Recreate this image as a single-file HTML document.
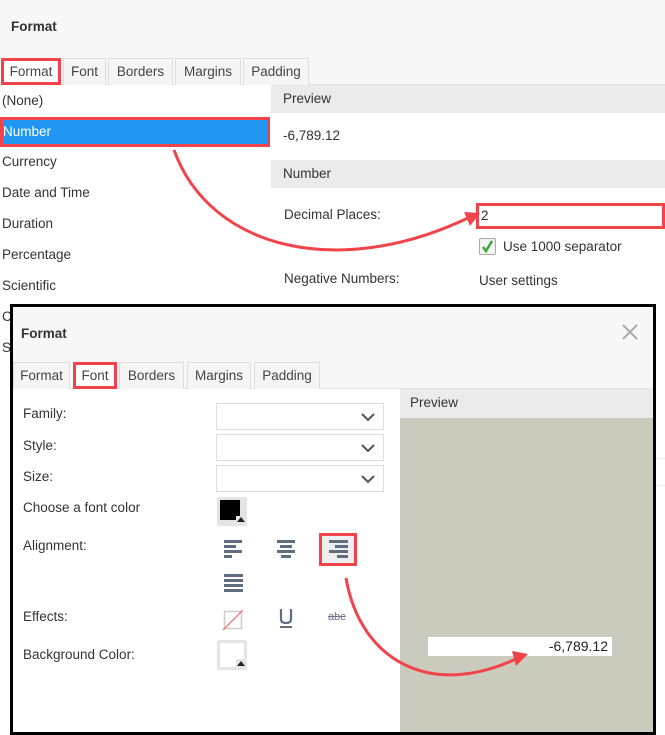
<!DOCTYPE html>
<html><head><style>
*{margin:0;padding:0;box-sizing:border-box}
body{width:665px;height:735px;position:relative;overflow:hidden;background:#fff;font-family:"Liberation Sans",sans-serif;font-size:13.5px;color:#333}
.a{position:absolute;white-space:nowrap}
.tab{position:absolute;height:27px;border:1px solid #ddd;border-bottom:none;background:#f5f5f5;text-align:center;line-height:25px;color:#444}
.red{border:3px solid #f0444a !important}
.tab.red{line-height:21px;border-bottom:3px solid #f0444a}
.sel{position:absolute;border:1px solid #ddd;background:#fff;height:27px;width:168px;left:216px}
.sel svg{position:absolute;right:8px;top:8px}
.bar{position:absolute;height:2.5px;background:#5e6e80}
</style></head><body>
<!-- top section -->
<div class="a" style="left:0;top:0;width:665px;height:85px;background:#f7f7f7"></div>
<div class="a" style="left:11px;top:19px;font-weight:bold;font-size:13.5px;color:#333">Format</div>
<div class="a" style="left:0;top:84px;width:665px;height:1px;background:#e3e3e3"></div>
<div class="tab red" style="left:1px;top:58px;width:60px;background:#fff">Format</div>
<div class="tab" style="left:63px;top:58px;width:43px">Font</div>
<div class="tab" style="left:108px;top:58px;width:65px">Borders</div>
<div class="tab" style="left:175px;top:58px;width:66px">Margins</div>
<div class="tab" style="left:243px;top:58px;width:66px">Padding</div>

<div class="a" style="left:2px;top:93px">(None)</div>
<div class="a red" style="left:0;top:117px;width:270px;height:30px;background:#2196f3;color:#fff;line-height:24px">Number</div>
<div class="a" style="left:2px;top:154px">Currency</div>
<div class="a" style="left:2px;top:185px">Date and Time</div>
<div class="a" style="left:2px;top:216px">Duration</div>
<div class="a" style="left:2px;top:247px">Percentage</div>
<div class="a" style="left:2px;top:278px">Scientific</div>
<div class="a" style="left:2px;top:309px">C</div>
<div class="a" style="left:2px;top:340px">S</div>

<div class="a" style="left:271px;top:85px;width:394px;height:28px;background:#ebebeb;padding:6px 12px">Preview</div>
<div class="a" style="left:283px;top:128px">-6,789.12</div>
<div class="a" style="left:271px;top:160px;width:394px;height:28px;background:#ebebeb;padding:6px 12px">Number</div>
<div class="a" style="left:284px;top:207px">Decimal Places:</div>
<div class="a red" style="left:476px;top:203px;width:189px;height:26px;padding:2px 0 0 2px">2</div>
<div class="a" style="left:479px;top:238px;width:17px;height:17px;border:1px solid #aaa;border-radius:2px;background:#f4f4f4"><svg width="15" height="15" style="position:absolute;left:0;top:0"><path d="M3 8 L6 12 L12 2" stroke="#3aa83a" stroke-width="2.5" fill="none"/></svg></div>
<div class="a" style="left:503px;top:239px">Use 1000 separator</div>
<div class="a" style="left:284px;top:271px">Negative Numbers:</div>
<div class="a" style="left:479px;top:273px">User settings</div>
<div class="a" style="left:655px;top:458px;width:10px;height:28px;border:1px solid #eee;border-right:none"></div>

<!-- dialog -->
<div class="a" style="left:10px;top:304px;width:646px;height:431px;border:3px solid #000;background:#fff;overflow:hidden">
  <div class="a" style="left:0;top:0;width:640px;height:81px;background:#f7f7f7"></div>
  <div class="a" style="left:0;top:81px;width:640px;height:1px;background:#e3e3e3"></div>
  <div class="a" style="left:8px;top:19px;font-weight:bold">Format</div>
  <svg class="a" style="left:608px;top:16px" width="18" height="18"><path d="M2 2L16 16M16 2L2 16" stroke="#aaa" stroke-width="2"/></svg>
  <div class="tab" style="left:0;top:55px;width:57px">Format</div>
  <div class="tab red" style="left:60px;top:55px;width:44px;background:#fff">Font</div>
  <div class="tab" style="left:106px;top:55px;width:65px">Borders</div>
  <div class="tab" style="left:174px;top:55px;width:64px">Margins</div>
  <div class="tab" style="left:241px;top:55px;width:66px">Padding</div>

  <div class="a" style="left:10px;top:99px">Family:</div>
  <div class="a" style="left:10px;top:131px">Style:</div>
  <div class="a" style="left:10px;top:162px">Size:</div>
  <div class="a" style="left:10px;top:193px">Choose a font color</div>
  <div class="a" style="left:10px;top:231px">Alignment:</div>
  <div class="a" style="left:10px;top:302px">Effects:</div>
  <div class="a" style="left:10px;top:340px">Background Color:</div>

  <div class="sel" style="left:203px;top:96px"><svg width="14" height="10"><path d="M1 2L7 8L13 2" stroke="#555" stroke-width="2" fill="none"/></svg></div>
  <div class="sel" style="left:203px;top:127px"><svg width="14" height="10"><path d="M1 2L7 8L13 2" stroke="#555" stroke-width="2" fill="none"/></svg></div>
  <div class="sel" style="left:203px;top:158px"><svg width="14" height="10"><path d="M1 2L7 8L13 2" stroke="#555" stroke-width="2" fill="none"/></svg></div>

  <div class="a" style="left:204px;top:190px;width:30px;height:29px;background:#e4e4e4;border-radius:2px"><div style="position:absolute;left:3px;top:3px;width:20px;height:20px;background:#000"></div><div style="position:absolute;left:19px;top:19px;width:10px;height:9px;background:#e4e4e4"></div><svg width="8" height="5" style="position:absolute;left:20px;top:20px"><path d="M0 5L4 0L8 5Z" fill="#222"/></svg></div>

  <!-- alignment -->
  <div class="bar" style="left:211px;top:233px;width:18px"></div><div class="bar" style="left:211px;top:238px;width:12px"></div><div class="bar" style="left:211px;top:243px;width:18px"></div><div class="bar" style="left:211px;top:248px;width:8px"></div>
  <div class="bar" style="left:264px;top:233px;width:18px"></div><div class="bar" style="left:267px;top:238px;width:12px"></div><div class="bar" style="left:264px;top:243px;width:18px"></div><div class="bar" style="left:268px;top:248px;width:10px"></div>
  <div class="a red" style="left:306px;top:226px;width:38px;height:33px;background:#eee"></div>
  <div class="bar" style="left:316px;top:233px;width:19px"></div><div class="bar" style="left:322px;top:238px;width:13px"></div><div class="bar" style="left:316px;top:243px;width:19px"></div><div class="bar" style="left:324px;top:248px;width:11px"></div>
  <div class="bar" style="left:211px;top:267px;width:19px"></div><div class="bar" style="left:211px;top:272px;width:19px"></div><div class="bar" style="left:211px;top:277px;width:19px"></div><div class="bar" style="left:211px;top:282px;width:19px"></div>

  <!-- effects -->
  <svg class="a" style="left:210px;top:303px" width="20" height="20"><rect x="1.5" y="1.5" width="17" height="17" fill="none" stroke="#ccc" stroke-width="1.5"/><path d="M0 20L20 0" stroke="#f06a6a" stroke-width="1.2"/></svg>
  <svg class="a" style="left:265px;top:301px" width="16" height="20"><path d="M3 1V11Q3 15 8 15Q13 15 13 11V1" stroke="#5e6e80" stroke-width="2.2" fill="none"/><path d="M2 19H14" stroke="#5e6e80" stroke-width="2"/></svg>
  <div class="a" style="left:315px;top:304px;font-size:11px;color:#6a7888;text-decoration:line-through">abc</div>

  <div class="a" style="left:204px;top:333px;width:30px;height:30px;background:#e4e4e4;border-radius:2px"><div style="position:absolute;left:3px;top:3px;width:24px;height:24px;background:#fff"></div><div style="position:absolute;left:19px;top:19px;width:10px;height:10px;background:#e4e4e4"></div><svg width="8" height="5" style="position:absolute;left:20px;top:21px"><path d="M0 5L4 0L8 5Z" fill="#222"/></svg></div>

  <div class="a" style="left:387px;top:82px;width:253px;height:29px;background:#ebebeb;padding:6px 10px">Preview</div>
  <div class="a" style="left:387px;top:111px;width:253px;height:320px;background:#cbcbbd"></div>
  <div class="a" style="left:415px;top:330px;width:184px;height:19px;background:#fff;text-align:right;padding-right:4px;font-size:14px;line-height:19px;color:#222">-6,789.12</div>
</div>

<!-- arrows -->
<svg class="a" style="left:0;top:0" width="665" height="735">
  <path d="M174 150 C210 250 340 280 470 217" stroke="#f0444a" stroke-width="3" fill="none"/>
  <path d="M464 212L480 213L470 226Z" fill="#f0444a"/>
  <path d="M346 578 C360 660 430 700 518 658" stroke="#f0444a" stroke-width="3" fill="none"/>
  <path d="M512 651L528 654L516 666Z" fill="#f0444a"/>
</svg>
</body></html>
